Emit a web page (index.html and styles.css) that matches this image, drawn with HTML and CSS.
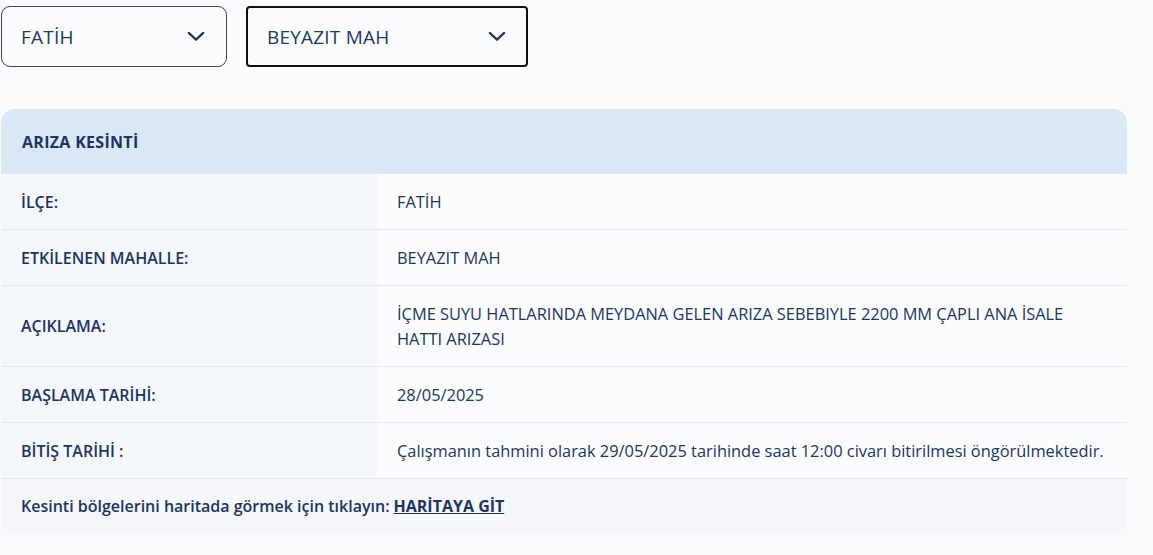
FILE: index.html
```html
<!DOCTYPE html>
<html lang="tr">
<head>
    <meta charset="UTF-8">
    <meta name="viewport" content="width=device-width, initial-scale=1.0">
    <title>Arıza Kesinti</title>
    <link rel="stylesheet" href="styles.css">
</head>
<body>

<div class="filters">
    <div class="select select-district">
        <span>FATİH</span>
        <svg class="chevron" viewBox="0 0 20 12" width="18" height="11"><path d="M2 2 L10 9.5 L18 2" fill="none" stroke="#1e3558" stroke-width="2.4" stroke-linecap="round" stroke-linejoin="round"/></svg>
    </div>
    <div class="select select-quarter active">
        <span>BEYAZIT MAH</span>
        <svg class="chevron" viewBox="0 0 20 12" width="18" height="11"><path d="M2 2 L10 9.5 L18 2" fill="none" stroke="#1e3558" stroke-width="2.4" stroke-linecap="round" stroke-linejoin="round"/></svg>
    </div>
</div>

<div class="card">
    <div class="card-header">ARIZA KESİNTİ</div>
    <div class="row">
        <div class="label">İLÇE:</div>
        <div class="value">FATİH</div>
    </div>
    <div class="row">
        <div class="label">ETKİLENEN MAHALLE:</div>
        <div class="value">BEYAZIT MAH</div>
    </div>
    <div class="row">
        <div class="label">AÇIKLAMA:</div>
        <div class="value">İÇME SUYU HATLARINDA MEYDANA GELEN ARIZA SEBEBIYLE 2200 MM ÇAPLI ANA İSALE HATTI ARIZASI</div>
    </div>
    <div class="row">
        <div class="label">BAŞLAMA TARİHİ:</div>
        <div class="value">28/05/2025</div>
    </div>
    <div class="row">
        <div class="label">BİTİŞ TARİHİ :</div>
        <div class="value">Çalışmanın tahmini olarak 29/05/2025 tarihinde saat 12:00 civarı bitirilmesi öngörülmektedir.</div>
    </div>
    <div class="card-footer">
        Kesinti bölgelerini haritada görmek için tıklayın: <a href="#" class="map-link">HARİTAYA GİT</a>
    </div>
</div>

</body>
</html>
```

FILE: styles.css
```css
body {
    margin: 0;
    padding: 6px 26px 0 1px;
    font-family: "Open Sans", Lato, sans-serif;
    background-color: #fafbfd;
    color: #1c3560;
}
.filters {
    display: flex;
    gap: 19px;
    margin-bottom: 42px;
}
.select {
    box-sizing: border-box;
    height: 61px;
    display: flex;
    align-items: center;
    justify-content: space-between;
    padding: 0 21px 0 19px;
    font-size: 19px;
    letter-spacing: 0.2px;
    color: #23385a;
    background-color: #fbfcfe;
    border: 1px solid #3c4452;
    border-radius: 9px;
}
.select-district {
    width: 226px;
}
.select-quarter {
    width: 282px;
    padding-right: 20px;
}
.select.active {
    border: 2px solid #111;
    border-radius: 4px;
}
.card {
    border-radius: 14px;
    overflow: hidden;
    background-color: #f6f8fb;
}
.card-header {
    height: 65px;
    display: flex;
    align-items: center;
    padding-left: 21px;
    background-color: #dce7f6;
    font-size: 16px;
    font-weight: bold;
    letter-spacing: 0.3px;
    color: #1b3463;
}
.row {
    display: grid;
    grid-template-columns: 376px 1fr;
    border-bottom: 1px solid #e6e9ee;
    font-size: 16.4px;
}
.label {
    display: flex;
    align-items: center;
    padding: 0 20px;
    background-color: #f4f7fb;
    font-size: 16px;
    font-weight: 600;
}
.value {
    padding: 15px 20px;
    line-height: 25px;
    background-color: #fbfcfe;
}
.card-footer {
    height: 54px;
    display: flex;
    align-items: center;
    padding-left: 20px;
    font-size: 16px;
    font-weight: 600;
    background-color: #f4f6fa;
}
.card-footer .map-link {
    margin-left: 4px;
    color: #1c3560;
    font-weight: bold;
}
```
